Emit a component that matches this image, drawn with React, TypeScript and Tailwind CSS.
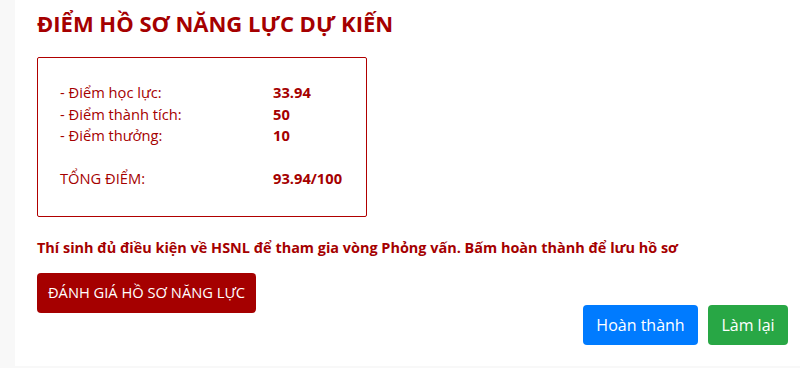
import React from 'react';

const rows = [
  { label: '- Điểm học lực:', value: '33.94' },
  { label: '- Điểm thành tích:', value: '50' },
  { label: '- Điểm thưởng:', value: '10' },
];

export default function App() {
  return (
    <div className="flex h-[368px] w-[800px] bg-[#f8f8f8] font-['Open_Sans',sans-serif]">
      <div className="ml-[15px] mb-[2px] flex flex-1 flex-col bg-white pl-[22px] pr-[12px] pt-[8px]">
        <h1 className="text-[22px] font-bold leading-[30px] text-[#a50000]">ĐIỂM HỒ SƠ NĂNG LỰC DỰ KIẾN</h1>

        <div className="mt-[19px] w-[330px] rounded-[2px] border border-[#b00000] px-[22px] pt-[24px] pb-[26px] text-[14.7px] leading-[21.5px] text-[#a50000]">
          {rows.map((r) => (
            <div key={r.label} className="flex">
              <span className="w-[213px]">{r.label}</span>
              <span className="font-bold">{r.value}</span>
            </div>
          ))}
          <div className="mt-[21.5px] flex">
            <span className="w-[213px]">TỔNG ĐIỂM:</span>
            <span className="font-bold">93.94/100</span>
          </div>
        </div>

        <p className="mt-[20px] text-[14.45px] font-bold leading-[22px] text-[#a50000]">
          Thí sinh đủ điều kiện về HSNL để tham gia vòng Phỏng vấn. Bấm hoàn thành để lưu hồ sơ
        </p>

        <div className="mt-[14px]">
          <button className="h-[40px] w-[219px] rounded-[4px] bg-[#a50000] text-[14.7px] text-white">
            ĐÁNH GIÁ HỒ SƠ NĂNG LỰC
          </button>
        </div>

        <div className="-mt-[8px] flex justify-end gap-[10px]">
          <button className="h-[40px] w-[115px] rounded-[4px] bg-[#007bff] text-[16px] text-white">Hoàn thành</button>
          <button className="h-[40px] w-[80px] rounded-[4px] bg-[#28a745] text-[16px] text-white">Làm lại</button>
        </div>
      </div>
    </div>
  );
}
